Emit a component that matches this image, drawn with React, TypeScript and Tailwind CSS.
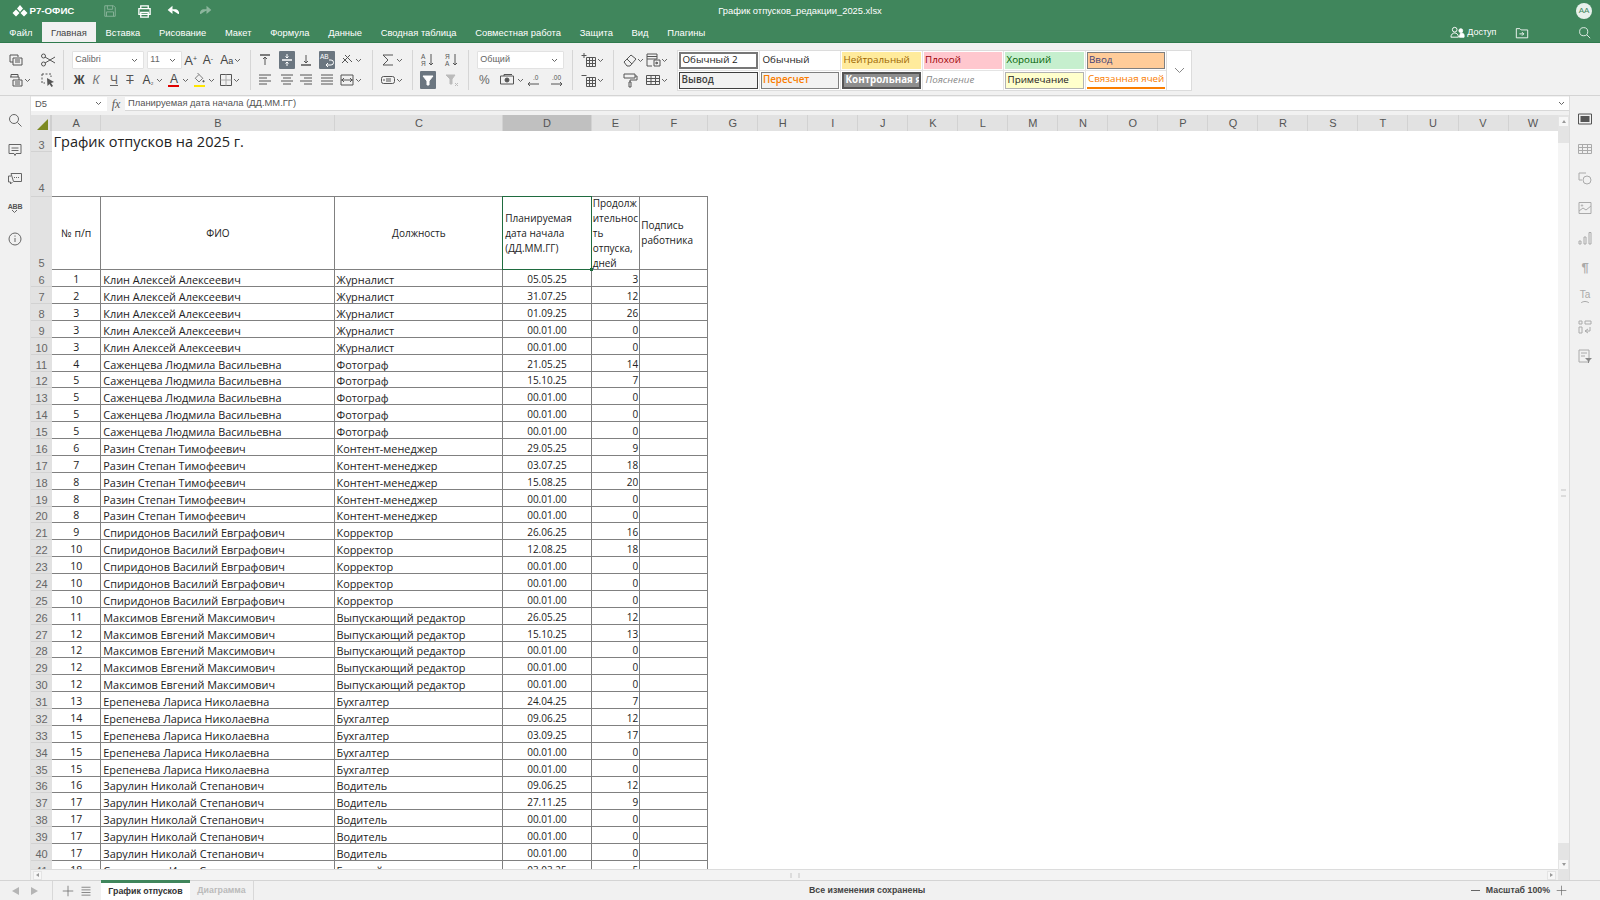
import type { ReactNode } from "react";

const GREEN = "bg-[#40865c]";

type Row = [number, number, string, string, string, number];

const people: [number, string, string, [number, string, number][]][] = [
  [6, "Клин Алексей Алексеевич", "Журналист", [[1, "05.05.25", 3], [2, "31.07.25", 12], [3, "01.09.25", 26], [3, "00.01.00", 0], [3, "00.01.00", 0]]],
  [11, "Саженцева Людмила Васильевна", "Фотограф", [[4, "21.05.25", 14], [5, "15.10.25", 7], [5, "00.01.00", 0], [5, "00.01.00", 0], [5, "00.01.00", 0]]],
  [16, "Разин Степан Тимофеевич", "Контент-менеджер", [[6, "29.05.25", 9], [7, "03.07.25", 18], [8, "15.08.25", 20], [8, "00.01.00", 0], [8, "00.01.00", 0]]],
  [21, "Спиридонов Василий Евграфович", "Корректор", [[9, "26.06.25", 16], [10, "12.08.25", 18], [10, "00.01.00", 0], [10, "00.01.00", 0], [10, "00.01.00", 0]]],
  [26, "Максимов Евгений Максимович", "Выпускающий редактор", [[11, "26.05.25", 12], [12, "15.10.25", 13], [12, "00.01.00", 0], [12, "00.01.00", 0], [12, "00.01.00", 0]]],
  [31, "Ерепенева Лариса Николаевна", "Бухгалтер", [[13, "24.04.25", 7], [14, "09.06.25", 12], [15, "03.09.25", 17], [15, "00.01.00", 0], [15, "00.01.00", 0]]],
  [36, "Зарулин Николай Степанович", "Водитель", [[16, "09.06.25", 12], [17, "27.11.25", 9], [17, "00.01.00", 0], [17, "00.01.00", 0], [17, "00.01.00", 0]]],
  [41, "Самикуатов Иван Сергеевич", "Главный редактор", [[18, "03.03.25", 5]]],
];

const rows: Row[] = people.flatMap(([start, name, job, items]) =>
  items.map(([n, date, days], i): Row => [start + i, n, name, job, date, days])
);

const colHeaders = [
  { l: "A", w: "w-[49.3px]" },
  { l: "B", w: "w-[234.2px]" },
  { l: "C", w: "w-[167.8px]" },
  { l: "D", w: "w-[88.4px]" },
  { l: "E", w: "w-[48.6px]" },
  { l: "F", w: "w-[68px]" },
  ..."GHIJKLMNOPQRSTUVW".split("").map((l) => ({ l, w: "w-[50.02px]" })),
];

const tabs = ["Файл", "Главная", "Вставка", "Рисование", "Макет", "Формула", "Данные", "Сводная таблица", "Совместная работа", "Защита", "Вид", "Плагины"];

const Svg = ({ children, className = "text-[#555]", size = 16 }: { children: ReactNode; className?: string; size?: number }) => (
  <svg viewBox="0 0 16 16" width={size} height={size} fill="none" stroke="currentColor" strokeWidth="1" className={className}>
    {children}
  </svg>
);

const Caret = ({ className = "" }: { className?: string }) => (
  <svg viewBox="0 0 7 5" width="7" height="5" fill="none" stroke="#666" strokeWidth="1" className={"shrink-0 " + className}>
    <path d="M1 1l2.5 2.5L6 1" />
  </svg>
);

// one toolbar icon slot, 16px wide so the rows can be spaced by margin
const T = ({ children, className = "", active = false }: { children: ReactNode; className?: string; active?: boolean }) => (
  <div className={"flex h-4 w-4 shrink-0 items-center justify-center " + className + (active ? " relative" : "")}>
    {active && <div className="absolute -inset-y-px inset-x-0 rounded-[1px] bg-[#6b7680]" />}
    <div className="relative flex items-center justify-center">{children}</div>
  </div>
);

const Sep = () => <div className="h-[40px] w-px shrink-0 bg-[#d6d6d6]" />;

const Rows = ({ a, b, className }: { a: ReactNode; b: ReactNode; className: string }) => (
  <div className={"flex shrink-0 flex-col gap-[2px] " + className}>
    <div className="flex h-[18px] items-center">{a}</div>
    <div className="flex h-[18px] items-center">{b}</div>
  </div>
);

const Select = ({ text, className }: { text: string; className: string }) => (
  <div className={"flex h-[18px] items-center justify-between rounded-[1px] border border-[#e2e2e2] bg-white pl-[2px] pr-[5px] text-[9px] text-[#666] " + className}>
    <span>{text}</span>
    <Caret />
  </div>
);

const Letter = ({ children, className = "" }: { children: ReactNode; className?: string }) => (
  <span className={"text-[12px] leading-none text-[#444] " + className}>{children}</span>
);

const alignLines: Record<string, string> = {
  left: "M2 3h12M2 6h8M2 9h12M2 12h8",
  center: "M2 3h12M4 6h8M2 9h12M4 12h8",
  right: "M2 3h12M6 6h8M2 9h12M6 12h8",
  just: "M2 3h12M2 6h12M2 9h12M2 12h12",
};

const styleCell = "flex h-[19px] items-center overflow-hidden whitespace-nowrap bg-white p-px text-[9.8px] leading-none";
const swatch = "flex h-full w-full items-center overflow-hidden pl-[1.5px] ";

const galleryFont = "font-['Open_Sans','Liberation_Sans',sans-serif]";

function Toolbar() {
  return (
    <div className="flex h-[53px] shrink-0 items-center border-b border-[#d4d4d4] bg-[#f1f1f1] pt-[2px]">
      <Rows
        className="w-[63px]"
        a={
          <>
            <T className="ml-[7.7px]"><Svg><path d="M2 3h8v2M2 3v7h3M5 6h9v7H5zM7 8h5M7 10h5" /></Svg></T>
            <T className="ml-[16.3px]"><Svg><circle cx="3.5" cy="4" r="2" /><circle cx="3.5" cy="12" r="2" /><path d="M5 5l10 6M5 11l10-6" /></Svg></T>
          </>
        }
        b={
          <>
            <T className="ml-[7.7px]"><Svg><path d="M3 5V2.5h7V5M2 5h9v3M5 8h9v6H5zM7 10h5M7 12h5" /></Svg></T>
            <Caret />
            <T className="ml-[9.3px]"><Svg><path d="M2 2h9v3M2 2v9h3" strokeDasharray="2 1.5" /><path d="M7 6l7 4-3 1 2 3-1.5 1-2-3-2 2z" fill="#555" stroke="none" /></Svg></T>
          </>
        }
      />
      <Sep />
      <Rows
        className="w-[186px]"
        a={
          <>
            <Select text="Calibri" className="ml-[8.3px] w-[72px] shrink-0" />
            <Select text="11" className="ml-[3px] w-[34.4px] shrink-0" />
            <T className="ml-[1px]"><Letter className="text-[13px]">A<sup className="text-[7px]">+</sup></Letter></T>
            <T className="ml-[1.3px]"><Letter>A<sup className="text-[7px]">-</sup></Letter></T>
            <T className="ml-[2.7px]"><Letter>A<span className="text-[9px]">a</span></Letter></T>
            <Caret className="-ml-px" />
          </>
        }
        b={
          <>
            <T className="ml-[7.3px]"><Letter className="font-bold text-[#333]">Ж</Letter></T>
            <T className="ml-[0.7px]"><Letter className="italic text-[#777]">К</Letter></T>
            <T className="ml-[2px]"><Letter className="text-[#666] underline">Ч</Letter></T>
            <T><Letter className="text-[#555] line-through">Т</Letter></T>
            <T className="ml-[2px]"><Letter>A<span className="text-[7px]">₂</span></Letter></T>
            <Caret className="ml-[0.5px]" />
            <T className="ml-[2.5px]">
              <div className="flex flex-col items-center">
                <Letter className="text-[11px]">A</Letter>
                <div className="h-[2px] w-[11px] bg-[#e00000]" />
              </div>
            </T>
            <Caret className="ml-[0.2px]" />
            <T className="ml-[2.1px]">
              <div className="flex flex-col items-center">
                <Svg size={12}><path d="M3 7l5-5 5 5-5 5zM8 2L6 0" /><circle cx="14" cy="11" r="1" fill="#555" /></Svg>
                <div className="h-[2px] w-[11px] bg-[#ffe600]" />
              </div>
            </T>
            <Caret className="ml-[0.9px]" />
            <T className="ml-[2.8px]"><Svg><path d="M2.5 2.5h11v11h-11z" /><path d="M8 2.5v11M2.5 8h11" stroke="#aaa" /></Svg></T>
            <Caret className="-ml-[0.5px]" />
          </>
        }
      />
      <Sep />
      <Rows
        className="w-[121px]"
        a={
          <>
            <T className="ml-[6px]"><Svg><path d="M3 3h10" strokeWidth="1.5" /><path d="M8 13V5M6 7l2-2 2 2" /></Svg></T>
            <T className="ml-[5.7px]" active><Svg className="text-white"><path d="M3 8h10" strokeWidth="1.5" /><path d="M8 2v4M8 14v-4M6.5 4.5L8 6l1.5-1.500M6.5 11.5L8 10l1.5 1.5" /></Svg></T>
            <T className="ml-[3.3px]"><Svg><path d="M3 13h10" strokeWidth="1.5" /><path d="M8 3v8M6 9l2 2 2-2" /></Svg></T>
            <T className="ml-[5.3px]" active><Svg className="text-white"><text x="1" y="7" fontSize="6.5" fill="white" stroke="none">AB</text><path d="M10 8h2a2.500 2.500 0 0 1 0 5H7M9 11l-2 2 2 2" /></Svg></T>
            <T className="ml-[4px]"><Svg><path d="M3 11l8-8M6 3l7 7M4 6l5 5" /></Svg></T>
            <Caret className="ml-[0.2px]" />
          </>
        }
        b={
          <>
            <T className="ml-[6px]"><Svg><path d={alignLines.left} /></Svg></T>
            <T className="ml-[5.7px]"><Svg><path d={alignLines.center} /></Svg></T>
            <T className="ml-[3.3px]"><Svg><path d={alignLines.right} /></Svg></T>
            <T className="ml-[5.3px]"><Svg><path d={alignLines.just} /></Svg></T>
            <T className="ml-[4px]"><Svg><path d="M2 3h12v10H2zM2 8h12M5 6l-2 2 2 2M11 6l2 2-2 2" /></Svg></T>
            <Caret className="ml-[0.2px]" />
          </>
        }
      />
      <Sep />
      <Rows
        className="w-[39px]"
        a={
          <>
            <T className="ml-[6.7px]"><Svg><path d="M13 3H3l5 5-5 5h10" /></Svg></T>
            <Caret />
          </>
        }
        b={
          <>
            <T className="ml-[6.7px]"><Svg><rect x="1.5" y="4.5" width="13" height="7" rx="2" /><path d="M6 7h5M6 9h5M4 7v2" /></Svg></T>
            <Caret />
          </>
        }
      />
      <Sep />
      <Rows
        className="w-[55px]"
        a={
          <>
            <T className="ml-[7.3px]"><Svg><path d="M11 2v11M9 11l2 2 2-2" /><text x="1" y="7" fontSize="6.5" fill="#555" stroke="none">А</text><text x="1" y="14" fontSize="6.5" fill="#555" stroke="none">Я</text></Svg></T>
            <T className="ml-[8px]"><Svg><path d="M11 2v11M9 11l2 2 2-2" /><text x="1" y="7" fontSize="6.5" fill="#555" stroke="none">Я</text><text x="1" y="14" fontSize="6.5" fill="#555" stroke="none">А</text></Svg></T>
          </>
        }
        b={
          <>
            <T className="ml-[7.3px]" active><Svg className="text-white"><path d="M3 4h10L9 9v4H7V9z" fill="white" /></Svg></T>
            <T className="ml-[8px]"><Svg className="text-[#bbb]"><path d="M2 3h9L8 7v5H6V7z" fill="#bbb" /><path d="M11 11l3 3M14 11l-3 3" /></Svg></T>
          </>
        }
      />
      <Sep />
      <Rows
        className="w-[103px]"
        a={<Select text="Общий" className="ml-[8.3px] w-[87px] shrink-0" />}
        b={
          <>
            <T className="ml-[7.3px]"><Letter className="text-[#666]">%</Letter></T>
            <T className="ml-[7px]"><Svg><path d="M1.5 4h13v8h-13zM5 4V2.5h8" /><circle cx="8" cy="8" r="2" fill="#555" /></Svg></T>
            <Caret className="ml-[1.9px]" />
            <T className="ml-[1.1px]"><Svg><path d="M14 12H3M5 10l-2 2 2 2" /><text x="8" y="8" fontSize="6.5" fill="#555" stroke="none">.0</text></Svg></T>
            <T className="ml-[8px]"><Svg><path d="M2 12h11M11 10l2 2-2 2" /><text x="3" y="8" fontSize="6.5" fill="#555" stroke="none">.00</text></Svg></T>
          </>
        }
      />
      <Sep />
      <Rows
        className="w-[40px]"
        a={
          <>
            <T className="ml-[8.3px]"><Svg><path d="M5.5 5.5h9v9h-9zM5.5 8.5h9M5.5 11.5h9M8.5 5.5v9M11.5 5.5v9M3 1v5M0.5 3.5h5" /></Svg></T>
            <Caret />
          </>
        }
        b={
          <>
            <T className="ml-[8.3px]"><Svg><path d="M5.5 5.5h9v9h-9zM5.5 8.5h9M5.5 11.5h9M8.5 5.5v9M11.5 5.5v9M0.5 3.5h5" /></Svg></T>
            <Caret />
          </>
        }
      />
      <Sep />
      <Rows
        className="w-[63px]"
        a={
          <>
            <T className="ml-[8px]"><Svg><path d="M2 10l7-7 5 4-6 7H5zM5 7l5 5" /></Svg></T>
            <Caret className="-ml-px" />
            <T className="ml-[1.1px]"><Svg><path d="M2 2h10v5H2zM2 7v7h5M2 4.5h10M9 8h6v6H9zM11 10l2 1-2 1z" /></Svg></T>
            <Caret className="ml-[0.2px]" />
          </>
        }
        b={
          <>
            <T className="ml-[8px]"><Svg><path d="M2 2h11v4H2zM13 4h2v4H8v2M7 10h2v5H7z" /></Svg></T>
            <Caret className="-ml-px opacity-0" />
            <T className="ml-[1.1px]"><Svg><path d="M1.5 3.5h13v9h-13zM1.5 6.5h13M1.5 9.5h13M6 3.5v9M10.5 3.5v9" /></Svg></T>
            <Caret className="ml-[0.2px]" />
          </>
        }
      />
      <div className={"grid w-[490px] shrink-0 grid-cols-6 gap-px border border-[#dcdcdc] bg-[#e4e4e4] " + galleryFont}>
        <div className={styleCell + " text-[#222]"}><div className={swatch + "border-2 border-[#777]"}>Обычный 2</div></div>
        <div className={styleCell + " pl-[3px] text-[#222]"}>Обычный</div>
        <div className={styleCell}><div className={swatch + "bg-[#ffeb9c] text-[#9c6500]"}>Нейтральный</div></div>
        <div className={styleCell}><div className={swatch + "bg-[#ffc7ce] text-[#9c0006]"}>Плохой</div></div>
        <div className={styleCell}><div className={swatch + "bg-[#c6efce] text-[#006100]"}>Хороший</div></div>
        <div className={styleCell}><div className={swatch + "border border-[#7f7f7f] bg-[#ffcc99] text-[#3f3f76]"}>Ввод</div></div>
        <div className={styleCell}><div className={swatch + "border border-[#3f3f3f] bg-[#f2f2f2] font-semibold text-[#3f3f3f]"}>Вывод</div></div>
        <div className={styleCell}><div className={swatch + "border border-[#7f7f7f] bg-[#f2f2f2] font-semibold text-[#fa7d00]"}>Пересчет</div></div>
        <div className={styleCell}><div className={swatch + "border-2 border-[#555] bg-[#8e8e8e] font-bold text-white"}>Контрольная я</div></div>
        <div className={styleCell + " pl-[3px] italic text-[#8a8a8a]"}>Пояснение</div>
        <div className={styleCell}><div className={swatch + "border border-[#b2b2b2] bg-[#ffffcc] text-[#222]"}>Примечание</div></div>
        <div className={styleCell}><div className={swatch + "border-b-2 border-[#fa7d00] text-[#fa7d00]"}>Связанная ячей</div></div>
      </div>
      <div className="flex h-[41px] w-[25px] shrink-0 items-center justify-center border border-l-0 border-[#dcdcdc] bg-white">
        <svg viewBox="0 0 11 7" width="11" height="7" fill="none" stroke="#888"><path d="M1 1l4.5 4.5L10 1" /></svg>
      </div>
    </div>
  );
}

function TitleBar() {
  return (
    <div className={"grid h-[22px] shrink-0 grid-cols-[1fr_auto_1fr] items-center text-white " + GREEN}>
      <div className="flex items-center">
        <svg viewBox="0 0 16 12" width="16" height="12" className="ml-[11.5px]" fill="white">
          <path d="M8 0l3 3.5-3 3.5-3-3.5zM4 4.5L7.5 8 4 11.5 0.5 8zM12 4.5L15.5 8 12 11.5 8.5 8z" />
        </svg>
        <span className="ml-[2px] text-[9.7px] font-bold">Р7-ОФИС</span>
        <Svg className="ml-[29px] text-white opacity-40" size={14}><path d="M2 2h10l2 2v10H2zM5 2v4h6V2M4 14V9h8v5" /></Svg>
        <Svg className="ml-[20px] text-white" size={15}><path d="M4 5V2h8v3M2 5h12v6H2zM4 9h8v5H4z" strokeWidth="1.4" /></Svg>
        <Svg className="ml-[15px] text-white" size={13}><path d="M2 6l4-3.5v7zM6 6h4a4 4 0 0 1 4 5" fill="white" strokeWidth="1.5" /></Svg>
        <Svg className="ml-[19px] text-white opacity-40" size={13}><path d="M14 6l-4-3.5v7zM10 6H6a4 4 0 0 0-4 5" fill="white" strokeWidth="1.5" /></Svg>
      </div>
      <div className="text-center text-[9.4px] leading-none">График отпусков_редакции_2025.xlsx</div>
      <div className="flex justify-end pr-[8px]">
        <div className="flex h-[16px] w-[16px] items-center justify-center rounded-full bg-[#e8f1ec] text-[8px] text-[#40865c]">АА</div>
      </div>
    </div>
  );
}

function TabBar() {
  return (
    <div className={"flex h-[21px] shrink-0 items-stretch border-b-[1.5px] border-[#2f7a4d] text-[9.4px] leading-none " + GREEN}>
      {tabs.map((t) => (
        <div
          key={t}
          className={"flex items-center px-[9.35px] pt-px " + (t === "Главная" ? "bg-[#f1f1f1] text-[#444]" : "text-white")}
        >
          {t}
        </div>
      ))}
      <div className="flex flex-1 items-center justify-end pt-px text-white">
        <Svg className="text-white" size={15}><circle cx="5" cy="5" r="2.5" /><path d="M1 13c0-3 2-4.5 4-4.5S9 10 9 13z" /><circle cx="11.5" cy="6" r="2" fill="white" /><path d="M10 13h5v-2a2.5 2.5 0 0 0-4-2z" fill="white" /></Svg>
        <span className="ml-[2px] text-[9px]">Доступ</span>
        <Svg className="ml-[18px] text-white" size={14}><path d="M1.5 3h4L7 4.5h7.5v9h-13zM5 9h5M8 7l2 2-2 2" /></Svg>
        <Svg className="ml-[49.5px] mr-[9px] text-white" size={13}><circle cx="7" cy="7" r="5" /><path d="M11 11l4 4" /></Svg>
      </div>
    </div>
  );
}

const sideIconGap = "flex h-[29.7px] shrink-0 items-center justify-center";

function LeftPanel() {
  return (
    <div className="flex w-[31px] shrink-0 flex-col items-center border-r border-[#e0e0e0] bg-[#f1f1f1] pt-[9px]">
      <div className={sideIconGap}><Svg className="text-[#666]"><circle cx="7" cy="7" r="4.5" /><path d="M10.5 10.5l4 4" /></Svg></div>
      <div className={sideIconGap}><Svg className="text-[#666]"><path d="M2 2.5h12v9H9l-1 2-1-2H2zM4.5 6h7M4.5 8.5h7" /></Svg></div>
      <div className={sideIconGap}><Svg className="text-[#666]"><path d="M4 5H1.5v6h2v2l2-2M4 2.5h10.5v8h-8z" /><path d="M7 6.5h1M9 6.5h1M11 6.5h1" /></Svg></div>
      <div className={sideIconGap}><div className="flex flex-col items-center leading-none"><span className="text-[7px] font-bold tracking-[-0.2px] text-[#555]">ABB</span><Caret className="-mt-[1px]" /></div></div>
      <div className={sideIconGap}><Svg className="text-[#666]"><circle cx="8" cy="8" r="6" /><path d="M8 7v4M8 4.5v1.2" /></Svg></div>
    </div>
  );
}

function RightPanel() {
  return (
    <div className="flex w-[31px] shrink-0 flex-col items-center border-l border-[#dcdcdc] bg-[#f1f1f1] pt-[8px] text-[#aaa]">
      <div className={sideIconGap}><Svg className="text-[#555]"><path d="M1.5 3h13v10h-13z" /><path d="M3.5 5h9v6h-9z" fill="#555" stroke="none" /></Svg></div>
      <div className={sideIconGap}><Svg className="text-[#aaa]"><path d="M1.5 3.5h13v9h-13zM1.5 6.5h13M1.5 9.5h13M5.5 3.5v9M10.5 3.5v9" /></Svg></div>
      <div className={sideIconGap}><Svg className="text-[#aaa]"><path d="M9 3H2v7h3" /><circle cx="10" cy="10" r="4" /></Svg></div>
      <div className={sideIconGap}><Svg className="text-[#aaa]"><path d="M2 2.5h12v11H2zM2 11l4-3 3 2 5-4" /><circle cx="5" cy="5.5" r="0.7" /></Svg></div>
      <div className={sideIconGap}><Svg className="text-[#aaa]"><path d="M2 11h2v3H2zM7 7h2v7H7zM12 2.5h2V14h-2z" /></Svg></div>
      <div className={sideIconGap}><span className="text-[13px] font-bold leading-none text-[#aaa]">¶</span></div>
      <div className={sideIconGap}><div className="flex flex-col items-center text-[10px] leading-[10px] text-[#aaa]">Ta<svg viewBox="0 0 10 3" width="10" height="3" fill="none" stroke="#aaa"><path d="M1 3c2-2 6-2 8 0" /></svg></div></div>
      <div className={sideIconGap}><Svg className="text-[#aaa]"><path d="M2 2h3v3H2zM8 2h6v3H8zM2 8h3v6H2zM8 12h5V8M11 10l-3 2 3 2" /></Svg></div>
      <div className={sideIconGap}><Svg className="text-[#aaa]"><path d="M2 2h10v12H2zM4 5h6M4 8h4" /><path d="M8 10h7l-3 3v2h-1v-2z" fill="#888" stroke="none" /></Svg></div>
    </div>
  );
}

function FormulaBar() {
  return (
    <div className="flex h-[19px] shrink-0 items-start bg-[#f1f1f1] pt-[0.7px]">
      <div className="flex h-[14.5px] w-[76px] shrink-0 items-center justify-between bg-white pl-[4px] pr-[5px] text-[9.4px] text-[#555]">
        D5
        <Caret />
      </div>
      <div className="flex h-[14.5px] w-[18px] shrink-0 items-center justify-center font-['Liberation_Serif',serif] text-[12px] italic text-[#555]">fx</div>
      <div className="flex h-[14.5px] flex-1 items-center justify-between border-b border-[#d8d8d8] bg-white pl-[3px] pr-[4px] text-[9.4px] text-[#555]">
        Планируемая дата начала (ДД.ММ.ГГ)
        <Caret />
      </div>
    </div>
  );
}

const hdr = "flex shrink-0 items-center justify-center border-r border-[#d2d2d2] text-[11px] text-[#555]";
const rowNum = "flex w-[21px] shrink-0 items-end justify-center bg-[#e2e2e2] font-['Liberation_Sans',sans-serif] text-[11px] leading-[11px] text-[#666]";
const cell = "flex shrink-0 items-center overflow-hidden whitespace-nowrap border-b border-r border-[#808080]";
const head = cell + " border-t";
const data = cell + " pt-[3px] leading-[13px]";

function Grid() {
  return (
    <div className="min-h-0 flex-1 overflow-hidden bg-white font-['Open_Sans','Liberation_Sans',sans-serif] text-[10.9px] text-[#222]">
      <div className="flex h-[15.7px] bg-[#e2e2e2] font-['Liberation_Sans',sans-serif]">
        <div className="flex w-[21px] shrink-0 items-end justify-end border-r-2 border-[#cfcfcf] pb-[1px] pr-[2px]">
          <svg viewBox="0 0 11 11" width="11" height="11"><path d="M11 0v11H0z" fill="#7d8a22" /></svg>
        </div>
        {colHeaders.map((c) => (
          <div key={c.l} className={hdr + " " + c.w + (c.l === "D" ? " bg-[#c0c0c0]" : "")}>{c.l}</div>
        ))}
      </div>

      <div className="flex h-[21.6px]">
        <div className={rowNum + " border-b border-[#d2d2d2]"}>3</div>
        <div className="whitespace-nowrap pl-[1.5px] text-[14.5px] leading-[22px]">График отпусков на 2025 г.</div>
      </div>
      <div className="flex h-[43.7px]">
        <div className={rowNum + " pb-[2px]"}>4</div>
      </div>

      <div className="flex h-[74.3px] text-[10px] leading-[15px]">
        <div className={rowNum + " border-t border-[#d2d2d2] bg-[#c0c0c0] pb-px"}>5</div>
        <div className={head + " w-[49.3px] justify-center text-[10.5px]"}>№ п/п</div>
        <div className={head + " w-[234.2px] justify-center"}>ФИО</div>
        <div className={head + " w-[167.8px] justify-center"}>Должность</div>
        <div className={head + " relative w-[88.4px] overflow-visible pl-[2px]"}>
          <div>Планируемая<br />дата начала<br />(ДД.ММ.ГГ)</div>
          <div className="absolute -inset-x-px -inset-y-px border border-[#1f6b3f]" />
          <div className="absolute -bottom-[2px] -right-[2px] h-[3px] w-[3px] bg-[#1f6b3f]" />
        </div>
        <div className={head + " w-[48.6px] pl-[1px]"}>
          <div>Продолж<br />ительнос<br />ть<br />отпуска,<br />дней</div>
        </div>
        <div className={head + " w-[68px] pl-[1px]"}>
          <div>Подпись<br />работника</div>
        </div>
      </div>

      {rows.map(([r, n, name, job, date, days]) => (
        <div key={r} className="flex h-[16.88px]">
          <div className={rowNum + " border-b border-[#d2d2d2]"}>{r}</div>
          <div className={data + " w-[49.3px] justify-center text-[10.5px]"}>{n}</div>
          <div className={data + " w-[234.2px] pl-[2px]"}>{name}</div>
          <div className={data + " w-[167.8px] pl-[1px]"}>{job}</div>
          <div className={data + " w-[88.4px] justify-center text-[10px]"}>{date}</div>
          <div className={data + " w-[48.6px] justify-end pr-[1px] text-[10px]"}>{days}</div>
          <div className={data + " w-[68px]"} />
        </div>
      ))}
    </div>
  );
}

function HScroll() {
  return (
    <div className="flex h-[11px] shrink-0 items-center border-t border-[#dcdcdc] bg-[#f1f1f1] px-[2px]">
      <div className="flex h-[9px] w-[9px] shrink-0 items-center justify-center border border-[#e4e4e4] bg-[#f7f7f7]">
        <div className="h-0 w-0 border-y-[2.5px] border-r-[3px] border-y-transparent border-r-[#999]" />
      </div>
      <div className="flex h-[10px] flex-1 items-center justify-center bg-[#f3f3f3]">
        <div className="h-[5px] w-[10px] border-x-2 border-[#dcdcdc]" />
      </div>
      <div className="flex h-[9px] w-[9px] shrink-0 items-center justify-center border border-[#e4e4e4] bg-[#f7f7f7]">
        <div className="h-0 w-0 border-y-[2.5px] border-l-[3px] border-y-transparent border-l-[#999]" />
      </div>
    </div>
  );
}

function VScroll() {
  return (
    <div className="flex w-[11px] shrink-0 flex-col items-center bg-[#e4e4e4] pt-[2px]">
      <div className="flex h-[9px] w-[9px] shrink-0 items-center justify-center bg-[#f7f7f7]">
        <div className="h-0 w-0 border-x-[2.5px] border-b-[3px] border-x-transparent border-b-[#999]" />
      </div>
      <div className="mt-[17px] flex h-[700px] w-[11px] shrink-0 items-center justify-center bg-[#f5f5f5]">
        <div className="h-[8px] w-[5px] border-y-2 border-[#dcdcdc]" />
      </div>
      <div className="mt-[17px] flex h-[9px] w-[9px] shrink-0 items-center justify-center bg-[#f7f7f7]">
        <div className="h-0 w-0 border-x-[2.5px] border-t-[3px] border-x-transparent border-t-[#999]" />
      </div>
    </div>
  );
}

function StatusBar() {
  return (
    <div className="flex h-[20px] shrink-0 items-stretch border-t border-[#d4d4d4] bg-[#f1f1f1] text-[8.8px] leading-none">
      <div className="flex w-[53px] shrink-0 items-center border-r border-[#d8d8d8] pl-[12px]">
        <div className="h-0 w-0 border-y-[4px] border-r-[7px] border-y-transparent border-r-[#b5b5b5]" />
        <div className="ml-[12px] h-0 w-0 border-y-[4px] border-l-[7px] border-y-transparent border-l-[#b5b5b5]" />
      </div>
      <div className="flex w-[48px] shrink-0 items-center pl-[9px]">
        <Svg className="text-[#666]" size={12}><path d="M8 1v14M1 8h14" /></Svg>
        <Svg className="ml-[6px] text-[#666]" size={12}><path d="M2 3h12M2 6.5h12M2 10h12M2 13.5h12" /></Svg>
      </div>
      <div className="-mt-px flex w-[89px] shrink-0 items-center justify-center border-t-[3px] border-[#40865c] bg-white font-bold text-[#333]">График отпусков</div>
      <div className="flex w-[64px] shrink-0 items-center justify-center border-r border-[#d8d8d8] font-bold text-[#bbb]">Диаграмма</div>
      <div className="ml-[555px] flex items-center font-bold text-[#444]">Все изменения сохранены</div>
      <div className="flex flex-1 items-center justify-end pr-[33px] font-bold text-[#444]">
        <div className="h-px w-[9px] bg-[#666]" />
        <span className="ml-[6px]">Масштаб 100%</span>
        <Svg className="ml-[6px] text-[#666]" size={11}><path d="M8 1v14M1 8h14" /></Svg>
      </div>
    </div>
  );
}

export default function App() {
  return (
    <div className="flex h-[900px] w-[1600px] flex-col overflow-hidden bg-[#f1f1f1] font-['Liberation_Sans',Arial,sans-serif]">
      <TitleBar />
      <TabBar />
      <Toolbar />
      <div className="flex min-h-0 flex-1">
        <LeftPanel />
        <div className="flex min-w-0 flex-1 flex-col">
          <FormulaBar />
          <div className="flex min-h-0 flex-1">
            <div className="flex min-w-0 flex-1 flex-col">
              <Grid />
              <HScroll />
            </div>
            <VScroll />
          </div>
        </div>
        <RightPanel />
      </div>
      <StatusBar />
    </div>
  );
}
